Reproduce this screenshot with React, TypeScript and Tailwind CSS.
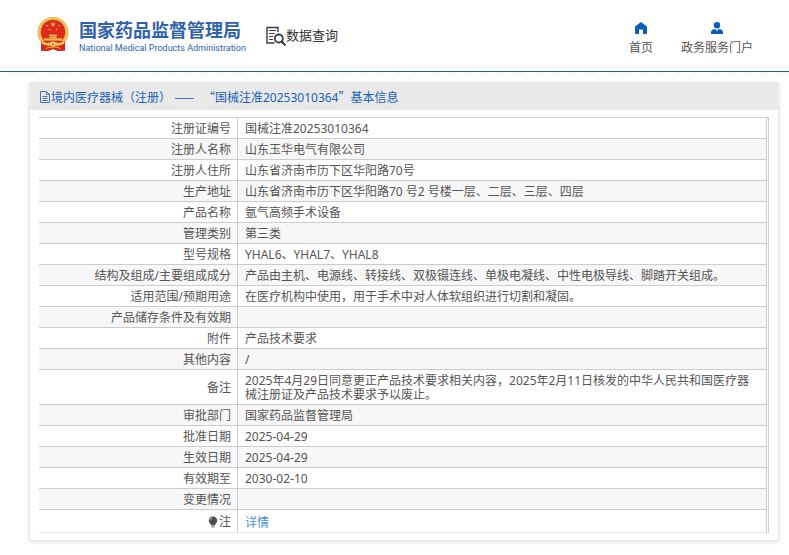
const rows = [
  { label: "注册证编号", value: "国械注准20253010364" },
  { label: "注册人名称", value: "山东玉华电气有限公司" },
  { label: "注册人住所", value: "山东省济南市历下区华阳路70号" },
  {
    label: "生产地址",
    value: "山东省济南市历下区华阳路70 号2 号楼一层、二层、三层、四层",
  },
  { label: "产品名称", value: "氩气高频手术设备" },
  { label: "管理类别", value: "第三类" },
  { label: "型号规格", value: "YHAL6、YHAL7、YHAL8" },
  {
    label: "结构及组成/主要组成成分",
    value:
      "产品由主机、电源线、转接线、双极镊连线、单极电凝线、中性电极导线、脚踏开关组成。",
  },
  {
    label: "适用范围/预期用途",
    value: "在医疗机构中使用，用于手术中对人体软组织进行切割和凝固。",
  },
  { label: "产品储存条件及有效期", value: "" },
  { label: "附件", value: "产品技术要求" },
  { label: "其他内容", value: "/" },
  {
    label: "备注",
    value:
      "2025年4月29日同意更正产品技术要求相关内容，2025年2月11日核发的中华人民共和国医疗器械注册证及产品技术要求予以废止。",
  },
  { label: "审批部门", value: "国家药品监督管理局" },
  { label: "批准日期", value: "2025-04-29" },
  { label: "生效日期", value: "2025-04-29" },
  { label: "有效期至", value: "2030-02-10" },
  { label: "变更情况", value: "" },
];

const star =
  "M0 -1L0.24 -0.32L0.95 -0.31L0.38 0.12L0.59 0.81L0 0.4L-0.59 0.81L-0.38 0.12L-0.95 -0.31L-0.24 -0.32Z";

const Emblem = () => (
  <svg viewBox="0 0 32 34" className="h-[34px] w-8 shrink-0">
    <path d="M4 23L4 33.5L10.5 34L16 32L21.5 34L28 33.5L28 23Z" fill="#d8261c" />
    <circle cx="16" cy="15.5" r="15.5" fill="#e9b44c" />
    <circle
      cx="16"
      cy="15.5"
      r="13.8"
      fill="none"
      stroke="#f4cf72"
      strokeWidth="1.4"
      strokeDasharray="2 1"
    />
    <circle cx="16" cy="15" r="12.2" fill="#de2a1c" />
    <g fill="#f6c04d">
      <path d={star} transform="translate(16 7.4) scale(2.8)" />
      <path d={star} transform="translate(10 8.5) scale(1.2)" />
      <path d={star} transform="translate(22 8.5) scale(1.2)" />
      <path d={star} transform="translate(12.5 12.5) scale(1.2)" />
      <path d={star} transform="translate(19.5 12.5) scale(1.2)" />
      <path d="M11.5 19L12.8 17.6H19.2L20.5 19ZM12.5 19.4H19.5V21H12.5Z" />
      <path d="M7 21.3H25V23.6H7Z" />
    </g>
    <path d="M4 24H28V33.5L21.5 34L16 32L10.5 34L4 33.5Z" fill="#d8261c" />
    <path
      d="M4 23Q9 27 12.5 25.5Q16 23.5 19.5 25.5Q23 27 28 23L27 27Q22 30 16 28Q10 30 5 27Z"
      fill="#f0c35a"
    />
    <circle cx="16" cy="27.4" r="2.3" fill="#f6d77c" />
    <circle cx="16" cy="27.4" r="0.9" fill="#de2a1c" />
    <path
      d="M9 32Q10 29.8 16 29.8Q22 29.8 23 32"
      fill="none"
      stroke="#e9a63a"
      strokeWidth="1.2"
    />
  </svg>
);

const SearchDocIcon = () => (
  <svg viewBox="0 0 20 20" className="size-5" fill="none" stroke="#3a3c40">
    <path d="M8.5 17H1V1.5H12V6" strokeWidth="1.4" />
    <path d="M3 4.5H10M3 7.5H8.5M3 10.5H7M3 13.5H7" strokeWidth="1.2" />
    <circle cx="12.8" cy="12.5" r="4" strokeWidth="1.8" fill="#fff" />
    <path d="M15.8 15.7L18.8 18.7" strokeWidth="2.2" strokeLinecap="round" />
  </svg>
);

const HomeIcon = () => (
  <svg viewBox="0 0 12 12" className="size-3" fill="#0d5cb8">
    <path d="M6 0L0.4 4.2Q0 4.5 0 5V11.2Q0 12 0.8 12H4V7.5H8V12H11.2Q12 12 12 11.2V5Q12 4.5 11.6 4.2Z" />
  </svg>
);

const PersonIcon = () => (
  <svg viewBox="0 0 12 12" className="size-3" fill="#0d5cb8">
    <circle cx="6" cy="3.2" r="3.2" />
    <path d="M3.2 7.2H4.8L6 9.2L7.2 7.2H8.8Q12 7.6 12 10.6V12H0V10.6Q0 7.6 3.2 7.2Z" />
  </svg>
);

const FileIcon = () => (
  <svg
    viewBox="0 0 12 12"
    className="size-3"
    fill="none"
    stroke="#3f74c4"
    strokeWidth="1"
  >
    <path d="M1.5 0.5H7.5L10.5 3.5V11.5H1.5Z" />
    <path d="M7.5 0.5V3.5H10.5M3.5 5.5H8.5M3.5 7.5H8.5M3.5 9.5H8.5" />
  </svg>
);

const BulbIcon = () => (
  <svg viewBox="0 0 10 12" className="h-3 w-2.5">
    <circle cx="5" cy="4.6" r="4.2" fill="#4c4c4c" />
    <path d="M2.5 8H7.5L6.7 9.6H3.3Z" fill="#4c4c4c" />
    <path d="M3.4 10.2H6.6V11.4H3.4Z" fill="#777" />
    <path d="M2.3 4.2Q2.6 2.5 4.2 2.1" fill="none" stroke="#ddd" strokeWidth="0.9" />
  </svg>
);

const Header = () => (
  <header className="flex h-18 items-start justify-between border-b border-[#1b6090] bg-white pl-[37px] pr-9">
    <div className="flex">
      <a href="#" className="flex gap-2.5 pt-[17px] text-[#2f62ad]">
        <Emblem />
        <span className="flex flex-col pt-px whitespace-nowrap">
          <span className="text-[18px] leading-[24px] font-bold">
            国家药品监督管理局
          </span>
          <span className="font-[Roboto] text-[9px] leading-[12px]">
            National Medical Products Administration
          </span>
        </span>
      </a>
      <a
        href="#"
        className="ml-5 flex pt-[26px] text-[13px] leading-[18px] text-[#333]"
      >
        <SearchDocIcon />
        数据查询
      </a>
    </div>
    <nav className="flex gap-7 pt-[22px] text-[12px] leading-[20px] text-[#555]">
      <a href="#" className="flex flex-col items-center gap-1">
        <HomeIcon />
        首页
      </a>
      <a href="#" className="flex flex-col items-center gap-1">
        <PersonIcon />
        政务服务门户
      </a>
    </nav>
  </header>
);

const App = () => {
  return (
    <div className="min-h-screen bg-white font-['Noto_Sans','Noto_Sans_CJK_SC',sans-serif] text-[12px] text-[#555]">
      <Header />
      <div className="h-2.5 bg-[repeating-linear-gradient(135deg,#e8f4f0_0_1px,#fff_1px_3px)] mask-b-from-0%" />
      <main className="mr-2.5 ml-[29px] border border-t-0 border-[#eaeaea] bg-white shadow-[0_1px_4px_rgba(0,0,0,0.12)]">
        <h1 className="flex h-7 items-center bg-[#e9e9e9] pt-0.5 pl-[9px] text-[#1b5fb5]">
          <FileIcon />
          <span>
            境内医疗器械（注册）{" "}
            <span className="mr-1.5 font-['Noto_Sans_CJK_SC',sans-serif]">
              ——
            </span>
            <span className="font-['Noto_Sans_CJK_SC',sans-serif]"> “</span>
            国械注准20253010364
            <span className="font-['Noto_Sans_CJK_SC',sans-serif]">”</span>
            基本信息
          </span>
        </h1>
        <div className="mx-[9px] my-[7px] border-t border-r border-[#ccc] pr-px">
          <table className="w-full border-separate border-spacing-0 border-r border-[#ccc] leading-[14px]">
            <tbody>
              {rows.map((row) => (
                <tr key={row.label} className="even:bg-[#f7f7f7]">
                  <th
                    scope="row"
                    className="w-[199px] border-r border-b border-[#ccc] pt-1 pr-1.5 pb-0.5 text-right font-normal"
                  >
                    {row.label}
                  </th>
                  <td className="h-[21px] border-b border-[#ccc] px-[7px] pt-1 pb-0.5">
                    {row.value}
                  </td>
                </tr>
              ))}
              <tr>
                <th
                  scope="row"
                  className="border-r border-b border-r-[#ccc] border-b-[#e5e5e5] pt-0.5 pr-1.5 font-normal"
                >
                  <span className="flex items-center justify-end gap-px">
                    <BulbIcon />注
                  </span>
                </th>
                <td className="h-[23px] border-b border-[#e5e5e5] px-[7px] pt-1">
                  <a href="#" className="text-[#4a90e2]">
                    详情
                  </a>
                </td>
              </tr>
            </tbody>
          </table>
        </div>
      </main>
    </div>
  );
};

export default App;
